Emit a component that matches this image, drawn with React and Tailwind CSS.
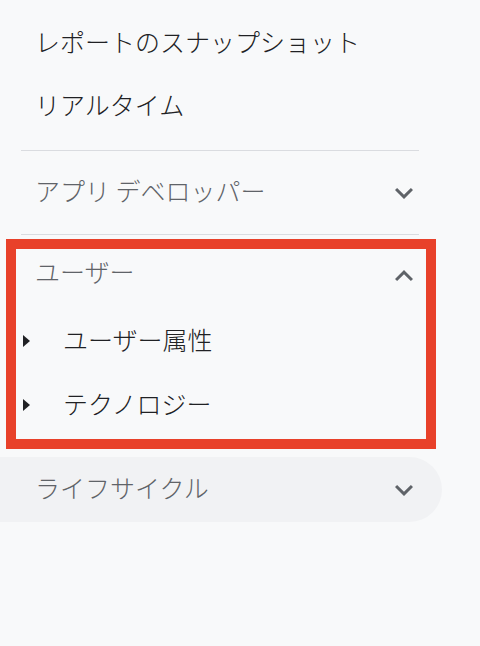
import React from "react";

const ChevronDown = () => (
  <svg width="36" height="36" viewBox="0 0 24 24" className="shrink-0">
    <path d="M16.59 8.59L12 13.17 7.41 8.59 6 10l6 6 6-6z" fill="#5f6368" />
  </svg>
);

const ChevronUp = () => (
  <svg width="36" height="36" viewBox="0 0 24 24" className="shrink-0">
    <path d="M12 8l-6 6 1.41 1.41L12 10.83l4.59 4.58L18 14z" fill="#5f6368" />
  </svg>
);

const Tri = () => (
  <svg width="7" height="12" viewBox="0 0 7 12" className="shrink-0">
    <path d="M0 0L7 6L0 12z" fill="#202124" />
  </svg>
);

export default function App() {
  return (
    <div
      className="w-[480px] h-[646px] overflow-hidden bg-[#f8f9fa] text-[25px] leading-none font-light"
      style={{ fontFamily: '"Noto Sans CJK JP", "Noto Sans", sans-serif' }}
    >
      <div className="pt-[10px] pb-[14px]">
        <div className="h-[63px] flex items-center pl-[35px] text-[#202124]">
          レポートのスナップショット
        </div>
        <div className="h-[63px] flex items-center pl-[35px] text-[#202124]">
          リアルタイム
        </div>
      </div>
      <div className="ml-[21px] w-[398px] h-px bg-[#dadce0]" />
      <div className="w-[442px] h-[83px] flex items-center justify-between pl-[35px] pr-[20px] text-[#5f6368]">
        <span className="-mt-[5px]">アプリ デベロッパー</span>
        <ChevronDown />
      </div>
      <div className="ml-[21px] w-[398px] h-px bg-[#dadce0]" />
      <div className="relative">
        <div className="w-[442px] h-[74px] flex items-center justify-between pl-[35px] pr-[20px] text-[#5f6368]">
          <span className="-mt-[2px]">ユーザー</span>
          <span className="mt-[8px]">
            <ChevronUp />
          </span>
        </div>
        <div className="h-[64px] flex items-center pl-[23px] gap-[33px] text-[#202124]">
          <Tri />
          <span className="-mt-[3px]">ユーザー属性</span>
        </div>
        <div className="h-[64px] flex items-center pl-[23px] gap-[33px] text-[#202124]">
          <Tri />
          <span className="-mt-[3px]">テクノロジー</span>
        </div>
        <div className="pointer-events-none absolute left-[6px] top-[4px] w-[430px] h-[210px] border-[10px] border-[#e8412a]" />
      </div>
      <div className="mt-[20px] w-[442px] h-[65px] rounded-r-full bg-[#f1f2f4] flex items-center justify-between pl-[35px] pr-[20px] text-[#5f6368]">
        <span className="-mt-[4px]">ライフサイクル</span>
        <ChevronDown />
      </div>
    </div>
  );
}
